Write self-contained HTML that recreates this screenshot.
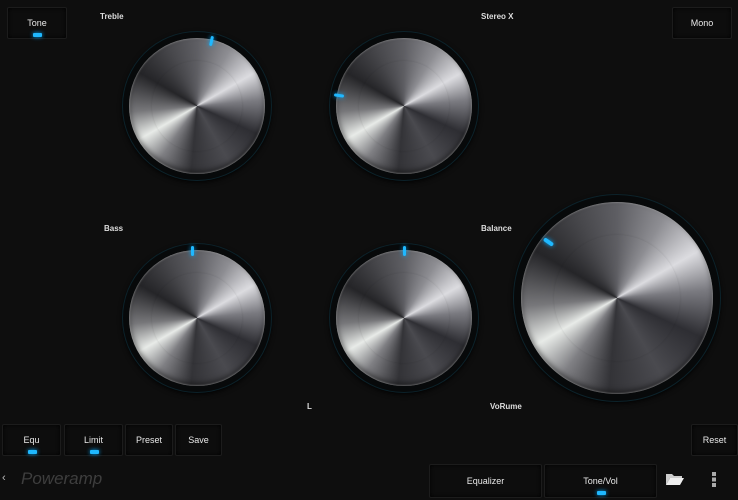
<!DOCTYPE html><html><head><style>
body{margin:0;width:738px;height:500px;overflow:hidden;background:#0e0e0e;font-family:"Liberation Sans",sans-serif;position:relative;}
.k{position:absolute;border-radius:50%;background:#07090a;box-shadow:0 0 0 1px #0c222a,0 2px 6px #000;}
.m{position:absolute;border-radius:50%;
background:conic-gradient(from 0deg,#5e5e63 0deg,#8d8d92 30deg,#dcdce0 60deg,#7a7a80 85deg,#2e2e33 115deg,#4a4a4f 150deg,#333337 185deg,#7f7f83 215deg,#e8ebe8 240deg,#77777a 265deg,#252528 300deg,#48484c 335deg,#5e5e63 360deg);
box-shadow:inset 0 0 2px #aaa,inset 0 -3px 6px rgba(0,0,0,.5);}
.m:after{content:"";position:absolute;left:17%;top:17%;right:17%;bottom:17%;border-radius:50%;box-shadow:0 0 2px rgba(0,0,0,.12);}
.led{position:absolute;background:#1fb8ff;border-radius:3px;box-shadow:0 0 5px #0af;}
.lbl{position:absolute;color:#ddd;font-size:8px;font-weight:bold;}
.btn{position:absolute;background:#0d0d0d;border:1px solid #1c1c1c;box-shadow:inset 0 0 4px #000;color:#e8e8e8;font-size:9px;text-align:center;border-radius:2px;}
.bl{position:absolute;width:9px;height:4px;background:#1fb8ff;border-radius:1px;box-shadow:0 0 4px #0af;left:50%;margin-left:-4px;}
</style></head><body>
<div class="btn" style="left:7px;top:7px;width:58px;height:30px;line-height:30px">Tone<div class="bl" style="top:25px"></div></div>
<div class="btn" style="left:672px;top:7px;width:58px;height:30px;line-height:30px">Mono</div>
<div class="lbl" style="left:100px;top:12px">Treble</div>
<div class="lbl" style="left:481px;top:12px">Stereo X</div>
<div class="lbl" style="left:104px;top:224px">Bass</div>
<div class="lbl" style="left:481px;top:224px">Balance</div>
<div class="lbl" style="left:307px;top:402px">L</div>
<div class="lbl" style="left:490px;top:402px">VoRume</div>

<div class="k" style="left:123px;top:32px;width:148px;height:148px"></div><div class="m" style="left:129px;top:38px;width:136px;height:136px"></div>
<div class="led" style="left:210px;top:36px;width:3px;height:10px;transform:rotate(12deg)"></div>
<div class="k" style="left:330px;top:32px;width:148px;height:148px"></div><div class="m" style="left:336px;top:38px;width:136px;height:136px"></div>
<div class="led" style="left:334px;top:94px;width:10px;height:3px;transform:rotate(8deg)"></div>
<div class="k" style="left:123px;top:244px;width:148px;height:148px"></div><div class="m" style="left:129px;top:250px;width:136px;height:136px"></div>
<div class="led" style="left:191px;top:246px;width:3px;height:10px"></div>
<div class="k" style="left:330px;top:244px;width:148px;height:148px"></div><div class="m" style="left:336px;top:250px;width:136px;height:136px"></div>
<div class="led" style="left:403px;top:246px;width:3px;height:10px"></div>
<div class="k" style="left:514px;top:195px;width:206px;height:206px"></div><div class="m" style="left:521px;top:202px;width:192px;height:192px"></div>
<div class="led" style="left:543px;top:240px;width:11px;height:4px;transform:rotate(35deg)"></div>

<div class="btn" style="left:2px;top:424px;width:57px;height:30px;line-height:30px">Equ<div class="bl" style="top:25px"></div></div>
<div class="btn" style="left:64px;top:424px;width:57px;height:30px;line-height:30px">Limit<div class="bl" style="top:25px"></div></div>
<div class="btn" style="left:125px;top:424px;width:46px;height:30px;line-height:30px">Preset</div>
<div class="btn" style="left:175px;top:424px;width:45px;height:30px;line-height:30px">Save</div>
<div class="btn" style="left:691px;top:424px;width:45px;height:30px;line-height:30px">Reset</div>
<div style="position:absolute;left:2px;top:472px;color:#bbb;font-size:11px">‹</div>
<div style="position:absolute;left:21px;top:469px;color:#3e3e3e;font-size:17px;font-style:italic">Poweramp</div>
<div class="btn" style="left:429px;top:464px;width:111px;height:32px;line-height:32px">Equalizer</div>
<div class="btn" style="left:544px;top:464px;width:111px;height:32px;line-height:32px">Tone/Vol<div class="bl" style="top:26px"></div></div>
<svg style="position:absolute;left:665px;top:472px" width="20" height="14"><path d="M1 2h6l2 2h8v2H5L1 13z" fill="#ccc"/><path d="M5 6h14l-4 7H1z" fill="#eee"/></svg>
<div style="position:absolute;left:712px;top:472px;width:4px;height:15px;background:repeating-linear-gradient(#aaa 0 4px,transparent 4px 5.5px)"></div>
</body></html>
